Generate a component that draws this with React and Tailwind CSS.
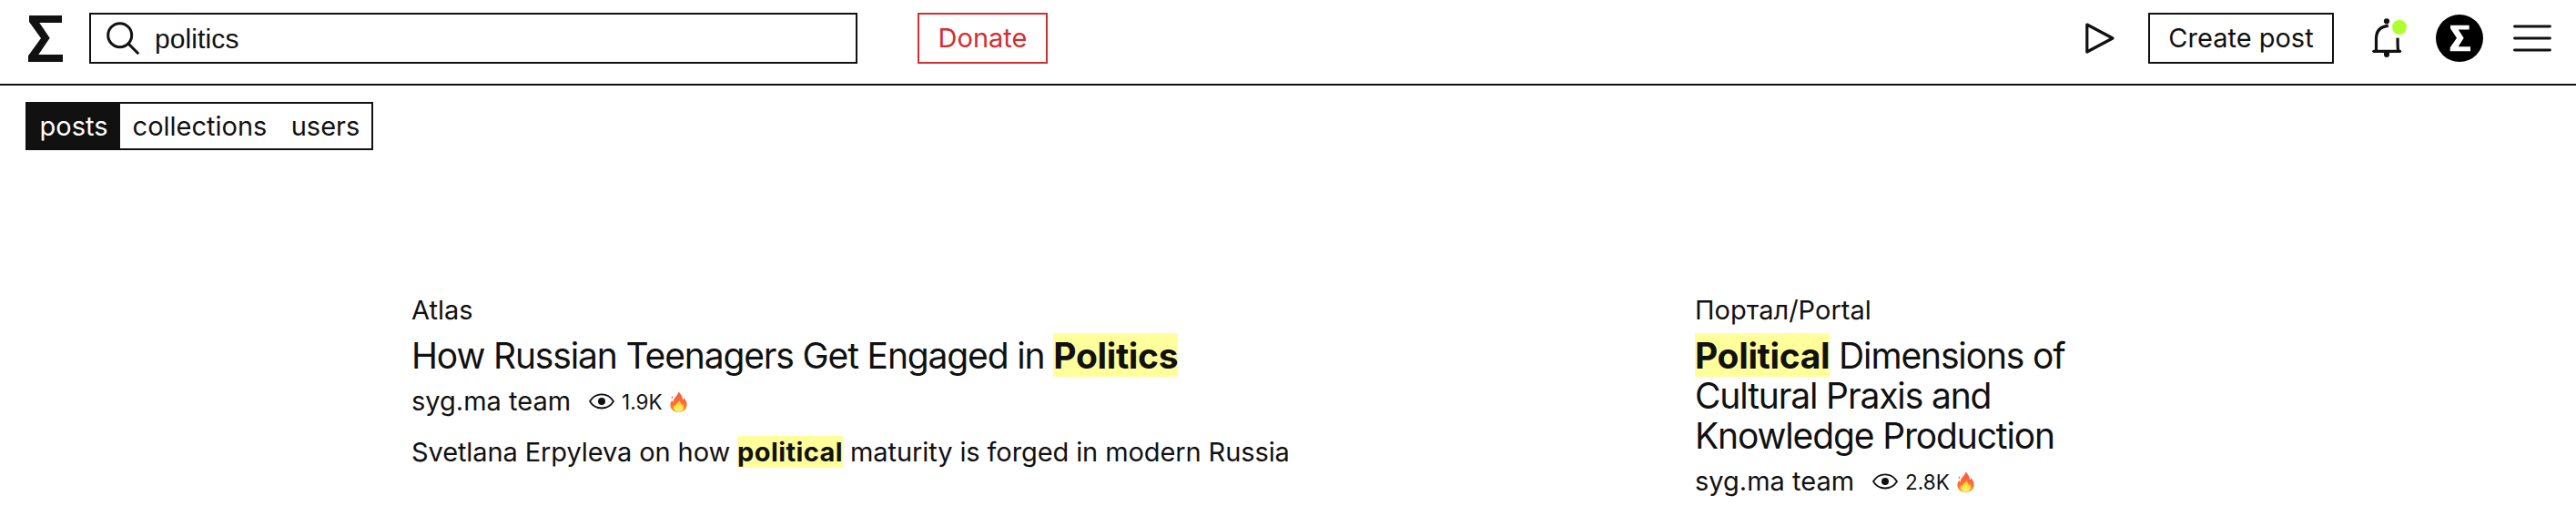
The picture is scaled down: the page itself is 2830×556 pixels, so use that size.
import React, { useState } from 'react';

const posts = [
  {
    id: 1,
    collection: 'Atlas',
    title: [['How Russian Teenagers Get Engaged in '], ['Politics', true]],
    author: 'syg.ma team',
    views: '1.9K',
    lead: [
      ['Svetlana Erpyleva on how '],
      ['political', true],
      [' maturity is forged in modern Russia'],
    ],
    width: 'w-[1410px]',
  },
  {
    id: 2,
    collection: 'Портал/Portal',
    title: [['Political', true], [' Dimensions of Cultural Praxis and Knowledge Production']],
    author: 'syg.ma team',
    views: '2.8K',
    width: 'w-[440px]',
  },
];

const Logo = () => (
  <svg className="w-[38px] h-[51px] shrink-0" viewBox="0 0 38 51" fill="#111">
    <path d="M1 0H37V8H12.3L23.7 24.7L11.3 43H38V51H0V44.3L14 25L1 7Z" />
  </svg>
);

const SearchIcon = () => (
  <svg className="w-9 h-9" viewBox="0 0 36 36" fill="none" stroke="#111" strokeWidth="3" strokeLinecap="round">
    <circle cx="14.7" cy="14.7" r="13" />
    <path d="M24.5 24.5L34.3 34.3" />
  </svg>
);

const PlayIcon = () => (
  <svg className="w-[34px] h-[36px]" viewBox="0 0 34 36" fill="none" stroke="#111" strokeWidth="3.2" strokeLinejoin="round">
    <path d="M2.8 3L31 18L2.8 33Z" />
  </svg>
);

const BellIcon = () => (
  <svg className="w-[38px] h-[46px]" viewBox="0 0 38 46" fill="none" stroke="#111" strokeWidth="3.2">
    <path d="M1.8 37.3H30.6" strokeLinecap="round" />
    <path d="M4.5 37V23.5C4.5 15.5 9 10.2 17.8 9.4M28 22.7C28.3 28 27.8 32 28.6 37" />
    <circle cx="16" cy="4.3" r="3.1" fill="#111" stroke="none" />
    <path d="M13 38H19V41A3 3 0 0 1 13 41Z" fill="#111" stroke="none" />
    <circle cx="30" cy="11" r="8" fill="#adff2f" stroke="none" />
  </svg>
);

const Avatar = () => (
  <svg className="w-[52px] h-[52px]" viewBox="0 0 52 52">
    <circle cx="26" cy="26" r="26" />
    <path fill="#fff" d="M16 11.7H36.7V16.4H24.7L30.7 25.7L24.7 35.3H38V40.3H15.7V36.3L23 25.7L16 15.3Z" />
  </svg>
);

const MenuIcon = () => (
  <svg className="w-[42px] h-[30px]" viewBox="0 0 42 30" stroke="#111" strokeWidth="2.8" strokeLinecap="round">
    <path d="M1.5 2H40.5M1.5 15H40.5M1.5 28H40.5" />
  </svg>
);

const EyeIcon = () => (
  <svg className="w-7 h-[18px]" viewBox="0 0 28 18" fill="none" stroke="#111" strokeWidth="1.8">
    <path d="M1 9C4 4 8.5 1.3 14 1.3S24 4 27 9C24 14 19.5 16.5 14 16.5S4 14 1 9Z" strokeLinejoin="round" />
    <circle cx="14" cy="9" r="4" fill="#111" stroke="none" />
  </svg>
);

const FlameIcon = () => (
  <svg className="w-[19px] h-[23px]" viewBox="0 0 19 23">
    <defs>
      <linearGradient id="flame" x1="0" y1="0" x2="0" y2="1">
        <stop offset="0" stopColor="#f4603c" />
        <stop offset="0.6" stopColor="#ff6a35" />
        <stop offset="1" stopColor="#ffa61f" />
      </linearGradient>
      <linearGradient id="core" x1="0" y1="0" x2="0" y2="1">
        <stop offset="0" stopColor="#ffb73a" />
        <stop offset="0.6" stopColor="#ffe83f" />
        <stop offset="1" stopColor="#fff59a" />
      </linearGradient>
    </defs>
    <path
      fill="url(#flame)"
      d="M9.6 0C10.5 2.5 14 4.5 14.3 9.5C15 9 15.3 8 15.3 7C17.5 9.5 18.8 12 18.6 15C18.4 20 14.5 22.8 9.5 22.8C4.3 22.8 .5 20 .4 15.5C.3 13 1.2 11.5 2.2 9.8C2.5 11 3 11.5 3.6 11.8C3.6 7 8.8 5 9.6 0ZM2.5 5.2C3.5 6 3.3 7.5 2.3 8C1.3 7.3 1.5 6 2.5 5.2Z"
    />
    <path
      fill="url(#core)"
      d="M10.4 9.5C10.8 12 13 12.8 13 15.5C13.7 15.2 14 14.7 14.2 14C16.5 18 14 22.3 9.6 22.3C5 22.3 2.8 18.5 4.6 14.8C5 15.6 5.5 16 6.2 16.1C6 13 9.7 12.5 10.4 9.5Z"
    />
  </svg>
);

const Highlighted = ({ parts, markClass }) =>
  parts.map(([text, match], i) =>
    match ? (
      <mark key={i} className={`bg-[#ffff9c] font-bold text-[#111] ${markClass}`}>
        {text}
      </mark>
    ) : (
      <span key={i}>{text}</span>
    )
  );

const Post = ({ post }) => (
  <article className={post.width}>
    <div className="text-[29px] leading-9">{post.collection}</div>
    <h2 className="mt-2.5 text-[39px] leading-11 tracking-[-1.14px]">
      <Highlighted parts={post.title} markClass="pt-px tracking-[-0.35px]" />
    </h2>
    <div className="mt-2.5 flex items-center">
      <span className="text-[29px] leading-9">{post.author}</span>
      <span className="ml-5 flex items-center">
        <EyeIcon />
        <span className="ml-2 pt-0.5 text-[22.5px] leading-8">{post.views}</span>
        <span className="ml-2">
          <FlameIcon />
        </span>
      </span>
    </div>
    {post.lead && (
      <p className="mt-5 text-[29px] leading-9 tracking-[-0.1px]">
        <Highlighted parts={post.lead} markClass="tracking-[0.4px]" />
      </p>
    )}
  </article>
);

const App = () => {
  const [query, setQuery] = useState('politics');
  const [tab, setTab] = useState('posts');

  return (
    <div className="h-[556px] overflow-hidden bg-white font-['Inter',sans-serif] text-[#111]">
      <header className="flex h-[94px] items-center border-b-2 border-[#111] pb-2 pl-[31px] pr-[27px]">
        <Logo />

        <label className="ml-[29px] flex h-14 w-[844px] items-center border-2 border-[#111] pl-[17px]">
          <SearchIcon />
          <input
            className="ml-[17px] w-[700px] pt-0.5 font-['Liberation_Sans',sans-serif] text-[30px] leading-9 tracking-[0.1px] outline-none"
            value={query}
            onChange={(e) => setQuery(e.target.value)}
          />
        </label>

        <button className="ml-[66px] h-14 w-[143px] border-2 border-[#d32f2f] text-[29px] text-[#d32f2f]">
          Donate
        </button>

        {/* Right side actions */}
        <div className="ml-auto flex items-center">
          <PlayIcon />
          <button className="ml-9 h-14 w-[204px] border-2 border-[#111] text-[29px]">Create post</button>
          <button className="ml-[42px]">
            <BellIcon />
          </button>
          <button className="ml-8">
            <Avatar />
          </button>
          <button className="ml-[33px]">
            <MenuIcon />
          </button>
        </div>
      </header>

      {/* Result type tabs */}
      <nav className="ml-7 mt-[18px] flex h-[53px] w-[382px] border-2 border-[#111] text-[29px]">
        {[
          ['posts', 'w-[102px]'],
          ['collections', 'w-[175px]'],
          ['users', 'w-[101px]'],
        ].map(([name, width]) => (
          <button
            key={name}
            onClick={() => setTab(name)}
            className={`${width} shrink-0 whitespace-nowrap ${tab === name ? 'bg-[#111] text-white' : ''}`}
          >
            {name}
          </button>
        ))}
      </nav>

      <main className="mt-[158px] flex pl-[452px]">
        {posts.map((post) => (
          <Post key={post.id} post={post} />
        ))}
      </main>
    </div>
  );
};

export default App;
